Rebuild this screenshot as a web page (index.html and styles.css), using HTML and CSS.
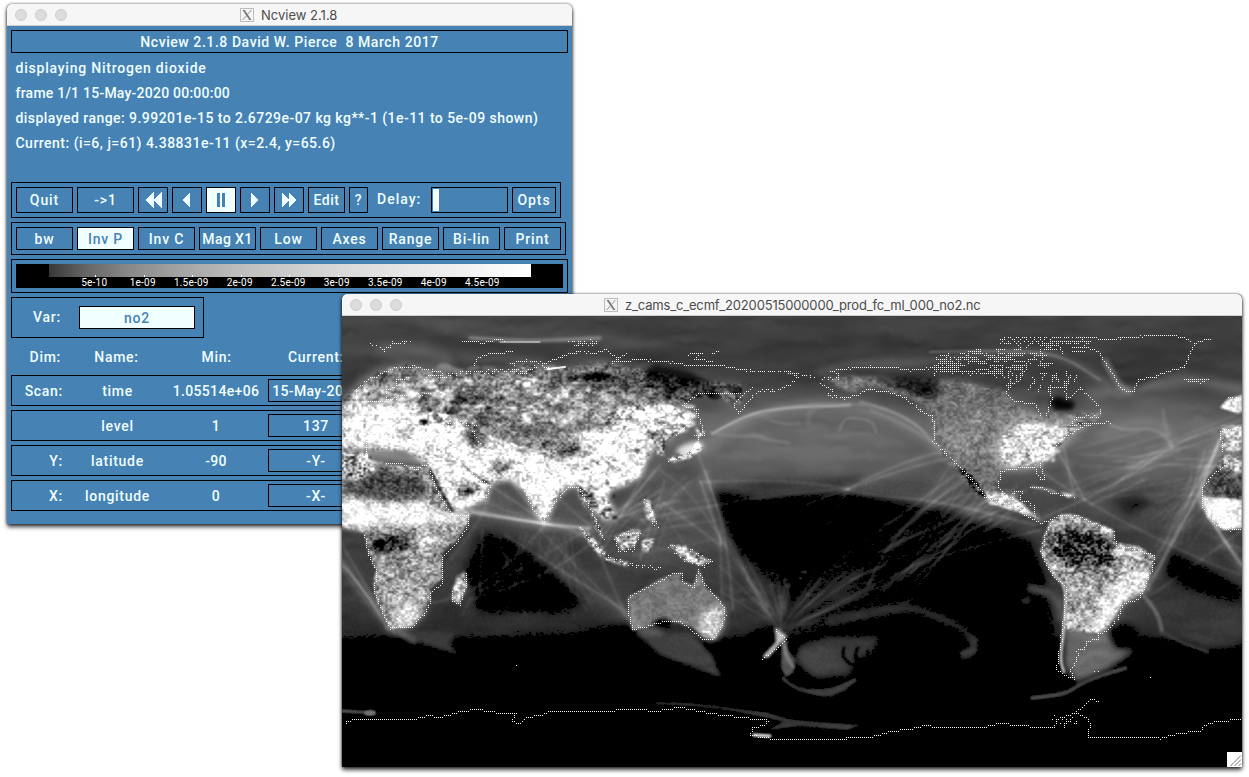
FILE: index.html
```html
<!DOCTYPE html>
<html lang="en">
<head>
<meta charset="utf-8">
<title>Ncview 2.1.8</title>
<link rel="stylesheet" href="styles.css">
</head>
<body>
<main class="desktop">
  <section class="window control">
    <header class="titlebar">
      <div class="lights"><i></i><i></i><i></i></div>
      <svg class="xicon" viewBox="0 0 14 14"><rect x=".5" y=".5" width="13" height="13" fill="#f4f4f4" stroke="#bdbdbd"/><path d="M2.5 2h2.2l6.8 10H9.300z" fill="#777"/><path d="M11.400 2 2.600 12" stroke="#888" stroke-width=".9"/></svg>
      <span class="caption">Ncview 2.1.8</span>
    </header>
    <div class="panel">
      <div class="frame banner"><span>Ncview 2.1.8 David W. Pierce&nbsp; 8 March 2017</span></div>
      <div class="info">
        <p class="l1">displaying Nitrogen dioxide</p>
        <p class="l2">frame 1/1 15-May-2020 00:00:00</p>
        <p class="l3">displayed range: 9.99201e-15 to 2.6729e-07 kg kg**-1 (1e-11 to 5e-09 shown)</p>
        <p class="l4">Current: (i=6, j=61) 4.38831e-11 (x=2.4, y=65.6)</p>
      </div>
      <div class="frame transport">
        <button class="btn wide">Quit</button>
        <button class="btn wide">-&gt;1</button>
        <button class="btn ico"><svg viewBox="0 0 28 24"><path d="M15 4v16L6 12zM23 4v16l-9-8z"/></svg></button>
        <button class="btn ico"><svg viewBox="0 0 28 24"><path d="M17 5v14l-8-7z"/></svg></button>
        <button class="btn ico on"><svg viewBox="0 0 28 24"><path d="M10 5h3v14h-3zM15 5h3v14h-3z"/></svg></button>
        <button class="btn ico"><svg viewBox="0 0 28 24"><path d="M10 5v14l8-7z"/></svg></button>
        <button class="btn ico"><svg viewBox="0 0 28 24"><path d="M7 5v14l8-7zM14 5v14l8-7z"/></svg></button>
        <button class="btn edit">Edit</button>
        <button class="btn help">?</button>
        <span class="delay">Delay:</span>
        <span class="field"><i></i></span>
        <button class="btn opts">Opts</button>
      </div>
      <div class="frame options">
        <button class="btn">bw</button><button class="btn on">Inv P</button><button class="btn">Inv C</button><button class="btn mag">Mag X1</button><button class="btn">Low</button><button class="btn">Axes</button><button class="btn">Range</button><button class="btn">Bi-lin</button><button class="btn">Print</button>
      </div>
      <div class="frame scale">
        <div class="scalebar">
          <div class="ramp"></div>
          <div class="ticks"><span>5e-10</span><span>1e-09</span><span>1.5e-09</span><span>2e-09</span><span>2.5e-09</span><span>3e-09</span><span>3.5e-09</span><span>4e-09</span><span>4.5e-09</span></div>
        </div>
      </div>
      <div class="frame var"><span>Var:</span><button class="btn on">no2</button></div>
      <div class="dims head"><span class="tag">Dim:</span><span class="name">Name:</span><span class="min">Min:</span><span class="cur">Current:</span></div>
      <div class="frame dims"><span class="tag">Scan:</span><span class="name">time</span><span class="min">1.05514e+06</span><button class="btn cur date">15-May-2020</button></div>
      <div class="frame dims"><span class="tag"></span><span class="name">level</span><span class="min">1</span><button class="btn cur">137</button></div>
      <div class="frame dims"><span class="tag">Y:</span><span class="name">latitude</span><span class="min">-90</span><button class="btn cur">-Y-</button></div>
      <div class="frame dims"><span class="tag">X:</span><span class="name">longitude</span><span class="min">0</span><button class="btn cur">-X-</button></div>
    </div>
  </section>

  <section class="window plot">
    <header class="titlebar">
      <div class="lights"><i></i><i></i><i></i></div>
      <svg class="xicon" viewBox="0 0 14 14"><rect x=".5" y=".5" width="13" height="13" fill="#f4f4f4" stroke="#bdbdbd"/><path d="M2.5 2h2.2l6.8 10H9.300z" fill="#777"/><path d="M11.400 2 2.600 12" stroke="#888" stroke-width=".9"/></svg>
      <span class="caption file">z_cams_c_ecmf_20200515000000_prod_fc_ml_000_no2.nc</span>
    </header>
    <canvas id="map" width="900" height="451"></canvas>
    <svg class="grip" viewBox="0 0 15 15"><rect width="15" height="15" fill="#fff"/><path d="M3.500 14 14 3.500M7.500 14 14 7.500M11.500 14 14 11.500" stroke="#777" fill="none"/></svg>
  </section>
</main>
<script src="map.js"></script>
</body>
</html>
```

FILE: styles.css
```css
* { box-sizing: border-box; }
body { margin: 0; background: #fff; overflow: hidden; }
.desktop { position: relative; width: 1249px; height: 777px; overflow: hidden; font: 500 14px/18px Roboto, sans-serif; letter-spacing: .5px; color: azure; }
.window { position: absolute; border-radius: 5px 5px 2px 2px; box-shadow: 0 3px 4px rgba(0,0,0,.75), 0 0 3px rgba(0,0,0,.6); }
.control { left: 7px; top: 4px; width: 565px; height: 520px; background: #4682b4; }
.plot { left: 342px; top: 294px; width: 900px; height: 473px; background: #000; }
.titlebar { height: 22px; display: flex; align-items: center; background: #f6f6f6; border-bottom: 1px solid #cfcfcf; border-radius: 5px 5px 0 0; color: #4c4c4c; }
.lights { display: flex; gap: 8px; padding-left: 8px; }
.lights i { width: 12px; height: 12px; border-radius: 50%; background: #dcdcdc; border: 1px solid #cdcdcd; }
.xicon { width: 14px; height: 14px; margin: 1px 0 0 173px; }
.plot .xicon { margin-left: 202px; }
.caption { margin-left: 7px; font: 400 13px/20px Inter, sans-serif; letter-spacing: 0; white-space: pre; padding-top: 1px; }
.file { letter-spacing: -.17px; }
.panel { padding: 4px; height: 498px; }
.frame { border: 1px solid #000; }
.banner { height: 23px; display: flex; align-items: center; justify-content: center; white-space: pre; letter-spacing: .57px; }
.info { padding: 3px 4px 0 4.5px; height: 129px; }
.info p { margin: 0; height: 25px; line-height: 25px; white-space: pre; }
.l1 { letter-spacing: .78px; }
.l2 { letter-spacing: .23px; }
.l3 { letter-spacing: .455px; }
.l4 { letter-spacing: .48px; }
.btn { appearance: none; margin: 0; padding: 0; border: 1px solid #000; border-radius: 0; background: transparent; color: inherit; font: inherit; letter-spacing: inherit; display: flex; align-items: center; justify-content: center; flex: none; white-space: pre; }
.btn.on { background: azure; color: #4682b4; }
.btn svg { width: 28px; height: 24px; fill: currentColor; shape-rendering: crispEdges; }
.transport { width: 550px; height: 36px; padding: 4px; display: flex; gap: 4px; }
.transport .btn { height: 26px; }
.transport .wide { width: 57px; letter-spacing: .9px; }
.transport .ico { width: 30px; }
.transport .edit { width: 37px; }
.transport .help { width: 19px; }
.delay { width: 55px; padding: 3px 0 0 5px; letter-spacing: 1px; }
.field { width: 77px; height: 26px; border: 1px solid #000; padding: 1px; }
.field i { display: block; width: 6px; height: 22px; background: azure; }
.transport .opts { width: 44px; letter-spacing: .9px; }
.options { width: 555px; height: 33px; margin-top: 4px; padding: 4px; display: flex; gap: 4px; letter-spacing: .8px; }
.options .btn { width: 57px; height: 23px; }
.options .mag { letter-spacing: .4px; }
.scale { height: 34px; margin-top: 4px; padding: 4px; }
.scalebar { height: 24px; background: #000; }
.ramp { margin-left: 33px; width: 482px; height: 13px; background: linear-gradient(90deg, #383838, #676767 8%, #8a8a8a 17%, #a5a5a5 28%, #bebebe 40%, #d3d3d3 55%, #e7e7e7 75%, #fff); }
.ticks { display: flex; margin-left: 54px; font: 400 10px/12px Roboto, sans-serif; letter-spacing: .2px; }
.ticks span { width: 48.5px; text-align: center; color: #fff; position: relative; flex: none; }
.ticks span::before { content: ""; position: absolute; left: 25px; top: -2px; width: 1px; height: 2px; background: #fff; }
.var { width: 193px; height: 41px; margin-top: 4px; padding-left: 21px; display: flex; align-items: center; letter-spacing: .8px; }
.var span { width: 46px; padding-bottom: 2px; }
.var .btn { width: 116px; height: 23px; }
.dims { display: flex; height: 31px; margin-bottom: 4px; align-items: center; letter-spacing: .7px; }
.head { height: 37px; margin: 0; }
.tag { width: 51px; text-align: right; }
.name { width: 109px; text-align: center; }
.min { width: 88px; text-align: center; }
.head .tag { width: 50px; }
.head .name { width: 111px; }
.head .min { width: 89px; }
.cur { width: 96px; margin-left: 8px; text-align: center; }
.head .cur { margin-left: 7px; }
.frame .min, .btn.date { letter-spacing: .35px; }
.btn.cur { height: 23px; padding-top: 1px; justify-content: center; }
#map { display: block; width: 900px; height: 451px; }
.grip { position: absolute; right: 0; bottom: 0; width: 15px; height: 15px; }
```

FILE: map.js
```js
(function () {
  // Coordinates: x = 342 + 2.5 * lon, y = 541 - 2.5 * lat
  var W = 900, H = 451, OX = 342, OY = 316;
  var seed = 7;
  function rnd() { seed = (seed * 1664525 + 1013904223) >>> 0; return seed / 4294967296; }
  function layer() {
    var c = document.createElement('canvas'); c.width = W; c.height = H;
    var g = c.getContext('2d', { willReadFrequently: true });
    g.fillStyle = '#000'; g.fillRect(0, 0, W, H); g.translate(-OX, -OY);
    g.lineCap = 'round'; g.lineJoin = 'round';
    return g;
  }
  function gray(v, a) { return 'rgba(' + v + ',' + v + ',' + v + ',' + (a === undefined ? 1 : a) + ')'; }
  function trace(g, p) { g.beginPath(); for (var i = 0; i < p.length; i += 2) g.lineTo(p[i], p[i + 1]); }
  function poly(g, p, v, blur, a) { g.filter = blur ? 'blur(' + blur + 'px)' : 'none'; g.fillStyle = gray(v, a); trace(g, p); g.closePath(); g.fill(); g.filter = 'none'; }
  function curve(g, p, v, w, blur, a) {
    g.filter = blur ? 'blur(' + blur + 'px)' : 'none'; g.strokeStyle = gray(v, a); g.lineWidth = w;
    g.beginPath(); g.moveTo(p[0], p[1]);
    for (var i = 2; i < p.length - 2; i += 2) g.quadraticCurveTo(p[i], p[i + 1], (p[i] + p[i + 2]) / 2, (p[i + 1] + p[i + 3]) / 2);
    g.lineTo(p[p.length - 2], p[p.length - 1]); g.stroke(); g.filter = 'none';
  }
  function blob(g, x, y, rx, ry, v, blur, a, rot) {
    g.filter = 'blur(' + blur + 'px)'; g.fillStyle = gray(v, a); g.beginPath(); g.ellipse(x, y, rx, ry, rot || 0, 0, 7); g.fill(); g.filter = 'none';
  }

  var f = layer(), t = layer();

  // Background concentration by latitude
  var grd = f.createLinearGradient(0, 316, 0, 767);
  [[316, 66], [350, 62], [380, 62], [400, 78], [425, 96], [455, 92], [490, 76], [540, 60], [600, 54], [634, 42], [642, 10], [648, 0], [767, 0]].forEach(function (s) { grd.addColorStop((s[0] - 316) / 451, gray(s[1])); });
  f.fillStyle = grd; f.fillRect(OX, OY, W, H);

  // Polar swirls
  curve(f, [342, 318, 450, 320, 560, 332, 620, 348, 760, 345], 90, 5, 4, .8);
  curve(f, [420, 324, 500, 338, 590, 338, 680, 350], 92, 6, 4, .6);
  curve(f, [342, 350, 400, 346, 440, 352, 500, 360, 560, 368], 88, 10, 5, .6);
  curve(f, [350, 395, 372, 370, 420, 366, 455, 366, 440, 352, 380, 350], 112, 8, 4, .65);
  curve(f, [470, 338, 510, 340, 540, 341, 600, 338], 150, 3, 1.500, .9);
  curve(f, [500, 342, 540, 342], 240, 1, .4);
  curve(f, [640, 356, 760, 342, 880, 340, 960, 350], 52, 12, 6, .8);
  curve(f, [820, 372, 850, 362, 890, 364, 940, 360, 1000, 351, 1060, 353, 1110, 385], 105, 6, 3, .7);
  curve(f, [930, 352, 1000, 350, 1060, 354, 1100, 380], 140, 2, 1.2, .7);
  curve(f, [1090, 395, 1150, 385, 1190, 378, 1242, 390], 128, 8, 4, .7);
  poly(f, [342, 375, 360, 368, 350, 400, 342, 400], 48, 3, .7);

  // Hazy northern oceans, Arabian Sea, Maritime Continent
  blob(f, 790, 440, 120, 30, 106, 12, .9); blob(f, 1150, 435, 80, 38, 104, 12, .85);
  poly(f, [640, 470, 700, 455, 730, 490, 725, 540, 700, 575, 640, 570, 600, 555, 640, 500], 84, 10, .75);
  poly(f, [470, 490, 530, 500, 580, 490, 610, 530, 600, 545, 540, 530, 470, 512], 86, 5, .8);
  poly(f, [545, 575, 600, 565, 640, 575, 628, 630, 580, 605], 66, 6, .9);
  curve(f, [700, 450, 750, 415, 800, 405, 860, 403, 920, 430, 970, 470], 148, 9, 5, .6);
  curve(f, [712, 434, 745, 414, 790, 407, 830, 406, 850, 405], 200, 2, 1.1, .85);
  curve(f, [720, 430, 770, 410, 830, 401, 900, 410, 945, 450], 150, 1.500, 1, .6);
  curve(f, [860, 402, 905, 412, 945, 455], 165, 2, 1.2, .6);
  curve(f, [870, 410, 920, 430, 960, 468], 160, 2, 1.5, .5);
  curve(f, [790, 443, 765, 440, 760, 435, 735, 437, 710, 432], 155, 2, 1.5, .7);
  curve(f, [808, 425, 808, 410, 820, 406], 140, 3, 2, .6);
  curve(f, [840, 430, 842, 418, 860, 418, 873, 422, 876, 432], 145, 2, 1.2, .6);
  curve(f, [770, 420, 785, 425, 800, 423], 150, 2, 1.5, .6);
  curve(f, [1100, 435, 1140, 420, 1165, 425, 1172, 445], 150, 8, 5, .5);
  curve(f, [1110, 425, 1125, 431, 1145, 428, 1162, 432, 1172, 447], 165, 2, 1.8, .6);
  curve(f, [1163, 410, 1164, 425, 1172, 447], 150, 2, 1.5, .6);

  // Clean air over the tropics and southern oceans
  [[712, 490, 760, 497, 840, 490, 900, 502, 960, 514, 1030, 540, 1046, 580, 1054, 645, 1056, 690, 700, 690, 722, 650, 790, 612, 762, 575, 740, 555, 724, 530],
   [480, 532, 520, 542, 545, 565, 585, 602, 560, 612, 478, 612, 466, 570],
   [342, 643, 400, 640, 460, 657, 450, 642, 560, 637, 625, 624, 660, 640, 720, 680, 1060, 660, 1130, 640, 1242, 655, 1242, 767, 342, 767],
   [1170, 550, 1200, 565, 1242, 588, 1242, 602, 1190, 590, 1165, 575]
  ].forEach(function (p) { poly(f, p, 0, 5, .97); });
  poly(f, [735, 484, 860, 478, 860, 483, 760, 488], 8, 4, .7);
  poly(f, [1110, 500, 1140, 495, 1150, 505, 1130, 515], 26, 5, .9);
  poly(f, [760, 560, 790, 600, 830, 575, 860, 560, 870, 590, 820, 620, 760, 625, 735, 580], 52, 9, .65);

  // Ship tracks and outflow
  f.globalCompositeOperation = 'lighter';
  function track(p, v, w) { curve(f, p, 255, w || 1.3, 1, v / 255); curve(f, p, 255, (w || 1.3) * 5, 3, v / 900); }
  [[780, 630, 825, 570, 880, 530], [780, 630, 885, 585], [785, 632, 900, 570, 960, 550, 1040, 530], [868, 585, 892, 530, 980, 470], [868, 585, 910, 530, 950, 465], [780, 630, 785, 580],
   [780, 630, 735, 560, 715, 500, 695, 445], [770, 622, 730, 545, 728, 500], [775, 625, 700, 500, 660, 470], [722, 545, 700, 480], [733, 610, 728, 540, 705, 470], [720, 530, 722, 600],
   [848, 489, 770, 495, 700, 508, 640, 520], [848, 489, 900, 460, 1000, 440], [848, 489, 900, 470, 950, 458], [848, 489, 860, 495, 935, 500, 1035, 525], [848, 489, 790, 510], [848, 489, 825, 530], [848, 489, 800, 480, 700, 482], [880, 530, 955, 475], [890, 540, 965, 475],
   [470, 513, 520, 520, 580, 530, 605, 555], [470, 511, 540, 525, 590, 528], [470, 509, 530, 522, 590, 530], [490, 485, 550, 525], [545, 525, 490, 590, 400, 610], [480, 592, 580, 535, 650, 490], [505, 535, 640, 620], [540, 530, 630, 620], [600, 555, 625, 615], [595, 540, 560, 570, 470, 600], [450, 560, 482, 520, 490, 490], [545, 525, 480, 500], [545, 525, 510, 480],
   [480, 592, 482, 530], [342, 570, 388, 630], [342, 545, 395, 635], [342, 560, 380, 615], [640, 480, 600, 555], [655, 470, 600, 540], [665, 480, 640, 560], [610, 520, 680, 500], [660, 500, 720, 545], [600, 530, 660, 490], [610, 520, 640, 490, 660, 465], [560, 500, 590, 525],
   [1042, 518, 1110, 490, 1180, 440, 1242, 420], [1040, 470, 1080, 500, 1200, 560, 1242, 575], [1145, 590, 1180, 530, 1205, 450], [1148, 590, 1195, 500], [1155, 560, 1200, 480, 1220, 440], [1155, 575, 1190, 510, 1222, 450], [1075, 490, 1180, 450], [1060, 455, 1085, 500], [1075, 500, 1060, 430], [1200, 500, 1242, 570], [1000, 500, 880, 590], [1145, 600, 1242, 530], [1110, 490, 1140, 460, 1172, 445], [1200, 530, 1242, 550], [1145, 480, 1090, 505]
  ].forEach(function (p) { track(p, 20 + rnd() * 22); });
  track([1220, 440, 1203, 480, 1200, 505, 1242, 565], 50, 3); track([342, 565, 365, 590, 388, 628], 45, 2.500); track([470, 512, 530, 522, 590, 528], 40, 2.500);
  for (var i = 0; i < 34; i++) {
    var bx = 960 + rnd() * 75, by = 480 + rnd() * 40;
    curve(f, [bx, by, bx - 60 - rnd() * 90, by + 45 + rnd() * 75], 255, 1.500, 1, .05 + rnd() * .07);
  }
  for (i = 0; i < 26; i++) {
    var a = -2.7 + rnd() * 2.6, r = 30 + rnd() * 80, r0 = 8 + rnd() * 25;
    curve(f, [782 + Math.cos(a) * r0, 628 + Math.sin(a) * r0 * .8, 782 + Math.cos(a) * r, 628 + Math.sin(a) * r * .8], 255, 1.500, 1, .06 + rnd() * .05);
  }
  for (i = 0; i < 30; i++) {
    var sx = 1060 + rnd() * 140, sy = 440 + rnd() * 60;
    curve(f, [sx, sy, sx + 70, sy - 35 * rnd() + 5], 255, 2, 1.200, .05);
    curve(f, [1155 + rnd() * 40, 560 - rnd() * 60, 1190 + rnd() * 50, 440 + rnd() * 60], 255, 1.500, 1, .04);
    curve(f, [600 + rnd() * 60, 560 - rnd() * 60, 640 + rnd() * 80, 470 + rnd() * 90], 255, 1.500, 1, .05);
    var ix = 480 + rnd() * 100; curve(f, [ix, 530 + rnd() * 20, ix + (rnd() - .5) * 80, 590 + rnd() * 30], 255, 1.200, .9, .07);
  }
  f.globalCompositeOperation = 'source-over';

  // Southern plumes
  poly(f, [635, 632, 690, 632, 712, 655, 722, 678, 700, 670, 660, 655], 66, 2);
  poly(f, [400, 632, 455, 633, 450, 645, 460, 655, 425, 645], 62, 2);
  curve(f, [388, 628, 400, 632, 415, 642], 120, 4, 2.500);
  poly(f, [800, 645, 830, 636, 880, 636, 872, 655, 855, 660, 850, 676, 815, 678, 795, 660], 58, 3);
  blob(f, 820, 658, 20, 14, 68, 5, .7);
  curve(f, [844, 648, 841, 655, 850, 664], 6, 3, 1.300); curve(f, [858, 648, 853, 655, 864, 668], 6, 3, 1.200); curve(f, [868, 650, 866, 655, 876, 662], 6, 2, 1.200);
  poly(f, [782, 640, 787, 640, 788, 650, 795, 660, 794, 672, 786, 677, 781, 668], 84, 1.500);
  curve(f, [783, 678, 792, 688, 818, 693, 832, 693, 855, 680], 54, 4, 1.200);
  poly(f, [800, 690, 830, 688, 856, 679, 846, 690, 830, 697, 815, 695], 60, 1.500);
  curve(f, [783, 638, 785, 655, 793, 667], 125, 3, 1.200);
  curve(f, [830, 620, 870, 612, 910, 606, 940, 618, 955, 624, 970, 634, 974, 648, 966, 656], 48, 8, 3);
  curve(f, [780, 636, 810, 628, 850, 618, 910, 604], 54, 8, 5, .7);
  curve(f, [974, 640, 976, 652, 962, 654], 60, 6, 2);
  poly(f, [1110, 605, 1140, 594, 1180, 602, 1242, 612, 1242, 645, 1205, 650, 1175, 636, 1150, 628, 1108, 630], 56, 4);
  curve(f, [1144, 596, 1158, 612, 1162, 632], 120, 3, 1.800); curve(f, [1162, 632, 1180, 642, 1208, 652], 70, 3, 1.500);
  curve(f, [1030, 588, 1048, 592, 1060, 602, 1062, 618], 92, 7, 3); blob(f, 1026, 600, 6, 4, 50, 2);
  poly(f, [1065, 615, 1108, 625, 1115, 648, 1135, 650, 1110, 668, 1078, 682, 1064, 668], 102, 3);
  blob(f, 1124, 634, 14, 9, 6, 3);
  curve(f, [1126, 668, 1105, 674, 1080, 684, 1066, 694, 1032, 698], 72, 4, 1.200);
  curve(f, [1075, 668, 1090, 650, 1108, 655], 125, 3, 2, .8); curve(f, [1070, 630, 1090, 640, 1105, 640], 130, 3, 2, .7);
  curve(f, [656, 703, 690, 704, 740, 710, 790, 722, 830, 726], 52, 3, 1);
  poly(f, [735, 710, 765, 712, 790, 720, 860, 725, 848, 730, 800, 726, 768, 730, 785, 720], 58, 1);
  curve(f, [754, 735, 770, 736], 235, 3, .8); curve(f, [342, 711, 360, 712, 374, 713], 92, 3, 1); blob(f, 370, 713, 6, 3, 120, 1);

  // Land: shape, level, texture strength
  function land(p, v, c, blur) { poly(f, p, v, blur === undefined ? 1.200 : blur); poly(t, p, c, 1.500); }
  // Eurasia
  land([342, 412, 345, 395, 358, 386, 378, 372, 405, 364, 445, 374, 470, 372, 510, 372, 522, 364, 560, 368, 600, 362, 660, 372, 690, 380, 742, 384, 742, 403, 730, 404, 718, 396, 690, 398, 672, 410, 695, 412, 690, 430, 668, 440, 655, 445, 640, 448, 480, 440, 342, 445], 125, 110, 5);
  poly(f, [560, 375, 700, 372, 750, 392, 700, 402, 640, 392, 600, 395], 66, 5, .8);
  poly(f, [642, 372, 655, 364, 690, 372, 712, 384, 700, 388, 665, 382, 648, 380], 8, 2, .8);
  poly(f, [570, 379, 590, 372, 610, 374, 618, 378, 600, 381], 0, 1.500);
  land([610, 410, 640, 405, 670, 405, 690, 412, 680, 430, 665, 442, 640, 448, 600, 440], 160, 200, 5);
  land([342, 405, 365, 402, 400, 404, 450, 412, 465, 425, 500, 440, 540, 442, 580, 432, 640, 425, 655, 445, 646, 462, 641, 476, 627, 485, 612, 489, 606, 497, 616, 512, 606, 522, 594, 510, 586, 502, 578, 486, 567, 487, 555, 500, 547, 520, 541, 520, 533, 506, 524, 490, 510, 479, 490, 484, 486, 500, 455, 512, 444, 500, 430, 468, 405, 450, 342, 450], 252, 150, 3);
  land([520, 448, 545, 440, 570, 436, 582, 448, 570, 458, 550, 456, 535, 450], 95, 150, 3);
  land([462, 430, 475, 425, 490, 438, 480, 448, 466, 442], 85, 120, 3);
  land([490, 462, 508, 460, 512, 474, 494, 476], 140, 180, 3);
  land([456, 484, 475, 482, 480, 492, 460, 497], 90, 190, 3);
  // Africa
  land([342, 452, 370, 459, 392, 465, 428, 466, 436, 485, 449, 512, 470, 511, 468, 523, 456, 541, 442, 553, 442, 578, 429, 590, 431, 600, 423, 613, 412, 626, 392, 629, 386, 622, 378, 605, 373, 583, 376, 570, 368, 550, 364, 533, 342, 528], 150, 140);
  land([345, 472, 375, 470, 425, 476, 428, 498, 380, 502, 345, 496], 72, 90, 4);
  land([342, 452, 368, 452, 376, 468, 362, 480, 342, 478], 165, 240, 3);
  land([342, 498, 390, 504, 420, 502, 440, 512, 470, 511, 462, 522, 435, 524, 400, 528, 364, 530, 342, 527], 250, 110, 3);
  land([370, 535, 400, 533, 412, 545, 400, 551, 374, 549], 45, 190, 3);
  land([395, 600, 420, 598, 424, 612, 410, 626, 392, 627], 225, 110, 4);
  land([415, 530, 435, 528, 438, 545, 420, 552], 215, 140, 3);
  land([457, 576, 465, 572, 467, 585, 459, 604, 452, 600, 453, 588], 180, 160, 1);
  curve(f, [430, 470, 440, 490, 453, 511], 25, 2, 1); curve(f, [462, 464, 478, 478, 488, 482], 60, 2, 1);
  // West Africa and Iberia
  land([1242, 395, 1228, 399, 1220, 408, 1238, 413, 1242, 412], 245, 120);
  land([1242, 425, 1222, 426, 1220, 447, 1230, 452, 1242, 450], 190, 150);
  land([1242, 453, 1224, 455, 1215, 468, 1203, 488, 1201, 500, 1242, 500], 84, 90);
  land([1242, 453, 1225, 456, 1218, 466, 1242, 474], 200, 170, 2);
  land([1201, 496, 1242, 500, 1242, 528, 1224, 530, 1208, 518], 248, 110);
  curve(f, [1207, 465, 1199, 490, 1199, 505, 1220, 530], 180, 2, 1.400, .8);
  // Southeast Asia and Japan
  [[578, 526, 586, 530, 606, 552, 603, 558, 590, 545], [604, 557, 628, 562, 628, 566, 606, 561], [615, 537, 628, 530, 640, 530, 635, 546, 622, 550], [642, 540, 655, 538, 648, 552, 642, 550], [670, 545, 685, 546, 712, 562, 700, 565, 684, 560], [643, 498, 650, 500, 656, 524, 647, 518], [590, 510, 600, 525, 603, 538, 595, 528], [668, 459, 692, 450, 697, 440, 703, 448, 690, 458, 672, 463], [696, 428, 706, 432, 698, 438], [656, 440, 665, 442, 664, 456, 657, 454]].forEach(function (p) { land(p, 190, 240, 1.200); });
  land([576, 488, 592, 490, 598, 505, 588, 512], 130, 255, 2);
  blob(f, 690, 448, 14, 5, 245, 2.500, .9, -.3);
  // Australia and New Zealand
  land([627, 597, 648, 586, 663, 577, 682, 572, 680, 580, 693, 585, 699, 569, 706, 588, 718, 597, 725, 610, 722, 628, 715, 640, 704, 637, 692, 627, 670, 621, 655, 625, 632, 630, 630, 612], 122, 36);
  land([706, 610, 724, 605, 722, 628, 712, 640, 702, 634, 698, 622], 225, 100, 4);
  blob(f, 662, 623, 9, 5, 5, 2);
  curve(f, [630, 615, 636, 630, 660, 632], 170, 4, 3, .8);
  poly(f, [775, 627, 787, 636, 778, 646, 768, 658, 762, 657, 776, 642], 185, 1.800);
  // North America
  land([820, 378, 850, 376, 900, 378, 960, 380, 1005, 390, 1015, 405, 1040, 415, 1060, 412, 1100, 412, 1100, 420, 1075, 432, 1060, 445, 1042, 462, 1042, 474, 1036, 468, 1000, 470, 998, 490, 1018, 492, 1016, 502, 1035, 510, 1044, 524, 1030, 515, 985, 502, 970, 488, 942, 456, 932, 435, 932, 415, 915, 400, 880, 388, 850, 392], 112, 60, 2);
  poly(f, [875, 381, 900, 376, 938, 378, 942, 395, 928, 400, 905, 388], 14, 3, .9);
  poly(f, [925, 408, 1000, 402, 1060, 418, 1042, 440, 1000, 468, 945, 450], 128, 8, .8);
  land([1003, 432, 1020, 422, 1045, 427, 1085, 422, 1070, 434, 1060, 445, 1042, 460, 1030, 466, 1002, 466, 1000, 450], 225, 150, 6);
  poly(f, [1050, 402, 1058, 396, 1066, 400, 1075, 402, 1072, 410, 1055, 410], 5, 2);
  land([958, 468, 968, 470, 988, 498, 975, 492], 30, 180, 1);
  land([985, 492, 1000, 492, 1018, 500, 1040, 520, 1020, 512, 990, 504], 215, 160, 1);
  curve(f, [1032, 487, 1048, 489, 1056, 493], 190, 2, 1, .7); poly(f, [1060, 492, 1075, 495, 1068, 498], 230, 1);
  // Greenland
  poly(f, [1106, 350, 1150, 340, 1190, 344, 1185, 365, 1160, 372, 1135, 388, 1122, 386, 1110, 370], 54, 4);
  curve(f, [1105, 360, 1112, 375, 1122, 388, 1130, 391], 180, 3, 2.500, .9);
  // South America
  land([1050, 522, 1062, 514, 1078, 515, 1100, 524, 1113, 530, 1114, 542, 1140, 547, 1155, 557, 1150, 572, 1143, 592, 1122, 603, 1108, 628, 1098, 633, 1066, 630, 1066, 585, 1052, 572, 1041, 552, 1043, 538], 170, 150);
  land([1052, 530, 1075, 528, 1100, 532, 1112, 545, 1115, 562, 1098, 568, 1072, 570, 1058, 560, 1050, 545], 50, 220, 4);
  land([1125, 572, 1148, 565, 1144, 590, 1122, 602, 1110, 622, 1088, 625, 1108, 595], 240, 110, 5);
  curve(f, [1042, 550, 1052, 574, 1067, 586, 1064, 630, 1060, 660, 1064, 672], 215, 2.500, 1.200);

  // Mediterranean
  poly(f, [350, 455, 385, 460, 430, 463, 425, 456, 405, 454, 375, 444, 355, 446], 150, 3, .8);

  // Emission hot spots over land
  function spots(n, x0, y0, x1, y1, v, s) { for (var k = 0; k < n; k++) blob(f, x0 + rnd() * (x1 - x0), y0 + rnd() * (y1 - y0), s * (.6 + rnd() * 1.600), s * (.4 + rnd() * .7), v, .9, .5 + rnd() * .5, -.2 + rnd() * .5); }
  spots(150, 395, 378, 580, 425, 250, 2.400); spots(50, 420, 395, 520, 425, 60, 3); spots(70, 355, 385, 420, 408, 220, 2.500); spots(60, 560, 388, 640, 425, 200, 2.500); spots(70, 620, 405, 690, 432, 255, 4);
  spots(60, 945, 405, 1000, 460, 200, 1); spots(60, 1003, 425, 1060, 460, 255, 2.500); spots(26, 560, 440, 640, 470, 110, 2);
  spots(30, 425, 366, 560, 380, 130, 4); spots(24, 650, 385, 740, 400, 12, 3); spots(12, 590, 480, 615, 530, 0, 2);
  spots(20, 740, 565, 810, 600, 80, 1.500); spots(30, 375, 560, 430, 600, 215, 2);
  curve(f, [548, 369, 565, 367], 250, 2, .6); curve(f, [520, 378, 545, 382], 230, 2, .8);

  // Lattice noise
  var tab = []; for (i = 0; i < 4096; i++) tab.push(rnd());
  function hash(x, y) { return tab[((x * 374761 + y * 668265) ^ (x * y * 13)) & 4095]; }
  function noise(x, y) {
    var a = Math.floor(x), b = Math.floor(y), u = x - a, v = y - b; u = u * u * (3 - 2 * u); v = v * v * (3 - 2 * v);
    return (hash(a, b) * (1 - u) + hash(a + 1, b) * u) * (1 - v) + (hash(a, b + 1) * (1 - u) + hash(a + 1, b + 1) * u) * v;
  }
  var out = document.getElementById('map').getContext('2d');
  var A = f.getImageData(0, 0, W, H), B = t.getImageData(0, 0, W, H), d = A.data, e = B.data;
  for (var y = 0; y < H; y++) for (var x = 0; x < W; x++) {
    var k = (y * W + x) * 4, v = d[k], c = e[k];
    // Slightly warped coordinates hide the lattice
    var wx = x + (noise(x / 9, y / 7) - .5) * 7, wy = y + (noise(x / 8 + 50, y / 8 + 20) - .5) * 6;
    var n = noise(x / 2.200, y / 1.900) * .4 + noise(wx / 4.500 + 9, wy / 3.500 + 40) * .35 + noise(wx / 11, wy / 7 + 90) * .25 - .5;
    var h = noise(wx / 26 + 3, wy / 7 + 7) - .5;
    v += n * c * 1.800 + h * (v > 30 ? 14 : 3);
    if (c < 20 && y > 160) {
      v += (noise(x / 2, y / 2) - .5) * 7;
      if (v < 26 + (noise(x / 2.500, y / 1.500) - .5) * 24) v = 0;
    }
    v = Math.max(0, Math.min(255, v)) | 0;
    d[k] = d[k + 1] = d[k + 2] = v; d[k + 3] = 255;
  }
  out.putImageData(A, 0, 0);

  // Coastlines: single white pixels on a two-pixel grid
  out.fillStyle = '#fff';
  function dot(x, y) { out.fillRect(Math.round((x - OX) / 2) * 2, Math.round((y - OY) / 2) * 2 + 1, 1, 1); }
  function coast(p, jit) {
    for (var i = 0; i < p.length - 2; i += 2) {
      var dx = p[i + 2] - p[i], dy = p[i + 3] - p[i + 1], n = Math.max(1, Math.round(Math.max(Math.abs(dx), Math.abs(dy)) / 2));
      for (var j = 0; j <= n; j++) dot(p[i] + dx * j / n + (rnd() - .5) * (jit || 0), p[i + 1] + dy * j / n + (rnd() - .5) * (jit || 0));
    }
  }
  coast([356, 398, 356, 388, 368, 378, 382, 372, 395, 366, 412, 365, 425, 368, 440, 370, 444, 375, 428, 374, 424, 378], 1);
  coast([396, 398, 386, 397, 386, 389, 396, 384, 396, 378, 408, 376], 2); coast([362, 400, 386, 400, 404, 393, 430, 393], 2);
  coast([436, 376, 455, 373, 470, 370, 495, 370, 512, 369, 524, 372], 3);
  coast([473, 363, 478, 356, 492, 351, 504, 351, 512, 349]); coast([510, 362, 525, 359, 545, 362, 562, 355, 575, 351, 600, 351, 605, 347, 618, 357, 625, 352, 612, 361, 640, 358, 662, 360, 690, 364, 720, 364, 745, 369, 785, 370, 798, 375, 790, 383, 775, 389, 758, 389, 750, 398, 738, 412, 734, 404, 740, 395, 752, 386], 1);
  coast([512, 362, 518, 372, 530, 368, 538, 362, 548, 366], 4);
  coast([461, 339, 475, 339, 482, 342, 495, 338, 504, 339]); coast([570, 341, 590, 340, 596, 342, 575, 344], 3); coast([371, 343, 385, 348, 392, 342, 410, 341], 3);
  coast([688, 353, 702, 351, 694, 357, 712, 360]); coast([712, 352, 717, 350]);
  coast([740, 392, 725, 391, 700, 391, 682, 404, 696, 408, 700, 420, 704, 433, 694, 434]); coast([676, 434, 688, 422, 698, 408]);
  coast([785, 370, 815, 376], 1); coast([830, 370, 838, 368, 870, 365, 890, 366, 910, 369, 940, 366], 1);
  coast([820, 383, 832, 388, 828, 394, 845, 397, 860, 392, 866, 388, 890, 391, 905, 396, 920, 409, 932, 415, 935, 430, 932, 440, 945, 452, 955, 462, 966, 472, 980, 488, 985, 496, 1000, 501, 1015, 505, 1026, 514, 1040, 522, 1060, 514, 1078, 515, 1100, 524, 1114, 531], 1.500);
  coast([823, 377, 838, 377, 836, 371], 2); coast([958, 464, 968, 475, 978, 485], 2);
  coast([1034, 512, 1033, 504, 1020, 498, 1022, 490, 1014, 490, 1011, 497, 1002, 492, 998, 484, 1000, 470, 1012, 467, 1034, 466, 1040, 478, 1044, 478, 1040, 462, 1052, 448, 1066, 434, 1080, 426, 1096, 421], 1.500);
  coast([1030, 486, 1040, 485, 1052, 492, 1075, 495], 1);
  coast([1040, 414, 1034, 402, 1014, 400, 1006, 392, 1008, 384, 1020, 378]); coast([1046, 414, 1052, 396, 1048, 386, 1065, 386, 1066, 398, 1080, 387, 1092, 398, 1101, 409, 1098, 415, 1076, 415, 1070, 424, 1090, 422, 1110, 421], 1);
  coast([1050, 340, 1090, 340, 1082, 345, 1098, 350, 1104, 360, 1112, 372, 1118, 384, 1126, 390, 1133, 389, 1138, 378, 1155, 375, 1170, 369, 1184, 366, 1188, 356, 1192, 346, 1196, 341, 1210, 337]); coast([1080, 337, 1120, 337, 1148, 334, 1176, 334, 1190, 339], 1);
  coast([1184, 377, 1208, 377, 1200, 381, 1188, 380, 1184, 377]);
  // Canadian archipelago
  for (i = 0; i < 115; i++) {
    var q = rnd(), top = 354 - q * 18, cx = 932 + q * 145, cy = top + rnd() * (372 - top);
    if (q > .75 && cy > 352) { cx -= 60; }
    if (rnd() < .6) coast([cx, cy, cx + 4 + rnd() * 10, cy]); else coast([cx, cy, cx + (rnd() - .3) * 8, cy + rnd() * 9]);
  }
  coast([1000, 337, 1085, 336], 2); coast([940, 370, 1000, 372], 2); coast([1000, 341, 1075, 341], 3);
  for (i = 0; i < 22; i++) { cx = 1008 + rnd() * 72; cy = 366 + rnd() * 18; coast([cx, cy, cx + 4 - rnd() * 8, cy + 6]); }
  // Africa, Arabia, India
  coast([366, 458, 366, 434, 375, 432], 1); coast([386, 462, 405, 463, 415, 468, 428, 463], 1); coast([430, 470, 436, 488, 448, 508, 452, 514, 468, 514, 468, 524, 456, 541, 442, 555, 442, 582, 430, 591, 430, 602, 423, 613, 412, 626, 390, 627, 382, 610, 374, 590, 376, 570, 368, 552, 364, 533]);
  coast([462, 504, 486, 495, 490, 484, 478, 478, 466, 464], 1); coast([466, 571, 466, 582, 460, 604, 452, 600, 453, 588, 464, 578], 1);
  coast([414, 424, 432, 426, 440, 423, 460, 422, 476, 424, 472, 432, 480, 442], 3);
  coast([524, 490, 533, 508, 543, 521, 555, 500, 568, 487, 578, 486, 588, 504, 596, 520, 603, 538], 1);
  coast([628, 600, 630, 594, 648, 586, 664, 577, 672, 572, 682, 572, 682, 580, 694, 586, 698, 568, 704, 583, 716, 596, 724, 606, 725, 614, 720, 628, 712, 638, 702, 637, 690, 628, 680, 620, 664, 620, 646, 625, 632, 628, 628, 610, 628, 600]);
  coast([775, 628, 786, 638, 776, 647, 762, 658]); coast([668, 545, 690, 549, 712, 560, 704, 565, 686, 560, 675, 552], 3); coast([614, 538, 628, 531, 640, 532, 632, 550, 618, 549, 614, 538], 2); coast([580, 527, 606, 556, 630, 563, 660, 567], 3); coast([645, 498, 657, 524, 648, 518], 3);
  coast([668, 460, 690, 452, 698, 440, 700, 432], 2);
  // South America, West Africa
  coast([1114, 531, 1116, 544, 1134, 548, 1154, 554, 1152, 568, 1144, 586, 1140, 597, 1122, 603, 1118, 616, 1108, 628, 1098, 633, 1098, 637, 1086, 640, 1084, 647, 1077, 648, 1076, 660, 1070, 668, 1074, 678, 1064, 674, 1056, 668, 1062, 630, 1066, 586, 1052, 574, 1041, 552, 1046, 530, 1052, 520], 1.500);
  coast([1228, 462, 1214, 472, 1202, 486, 1202, 506, 1216, 524, 1230, 529, 1242, 528]); coast([1222, 450, 1220, 430, 1240, 426], 1); coast([1228, 396, 1242, 398], 2);
  // Antarctica
  coast([345, 721, 354, 718, 412, 718, 428, 714, 440, 716, 460, 710, 478, 708, 500, 712, 515, 712, 512, 720, 520, 722, 526, 716, 540, 714, 550, 710, 580, 709, 590, 710, 640, 708, 655, 710, 680, 706, 710, 712, 750, 717, 768, 719, 764, 724, 752, 726, 750, 734, 770, 737, 845, 737, 870, 736, 890, 730, 908, 728, 924, 724, 940, 726, 982, 726, 998, 722, 1030, 725, 1054, 725, 1056, 718, 1074, 712, 1086, 702, 1092, 697, 1098, 700]);
  coast([1076, 712, 1086, 716, 1090, 722, 1087, 736, 1160, 737, 1174, 733, 1200, 729, 1204, 724, 1216, 720, 1242, 718]); coast([1054, 716, 1076, 720, 1062, 724, 1074, 712], 4);
  dot(515, 664); dot(1093, 670); dot(1097, 670); dot(1150, 676);
})();
```
